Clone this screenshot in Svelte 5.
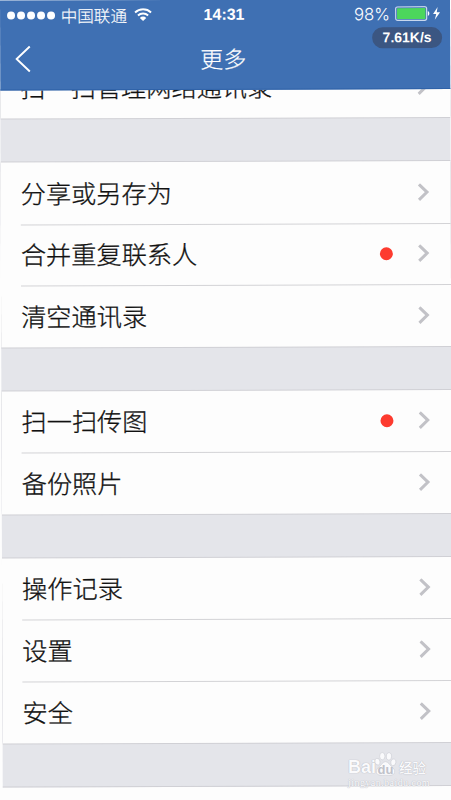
<script lang="ts">
  type Item = { label: string; dot?: boolean };

  const groups: Item[][] = [
    [{ label: '扫一扫管理网络通讯录' }],
    [{ label: '分享或另存为' }, { label: '合并重复联系人', dot: true }, { label: '清空通讯录' }],
    [{ label: '扫一扫传图', dot: true }, { label: '备份照片' }],
    [{ label: '操作记录' }, { label: '设置' }, { label: '安全' }],
  ];
</script>

<div class="viewport">
  <div class="screen">
    <header>
      <div class="status">
        <div class="carrier">
          <span class="signal">
            {#each Array(5) as _}
              <i></i>
            {/each}
          </span>
          <span class="name">中国联通</span>
          <svg class="wifi" width="18" height="13" viewBox="0 0 18 13">
            <path d="M1 4.4a11.6 11.6 0 0 1 16 0M3.9 7.4a7.4 7.4 0 0 1 10.2 0" fill="none" stroke="#fff" stroke-width="1.9" />
            <path d="M9 13 5.8 9.8a4.6 4.6 0 0 1 6.4 0z" fill="#fff" />
          </svg>
        </div>
        <span class="time">14:31</span>
        <div class="power">
          <span class="percent">98%</span>
          <svg width="46" height="15" viewBox="0 0 46 15">
            <rect x=".6" y=".6" width="31" height="13.6" rx="2" fill="none" stroke="#c9d8ee" stroke-width="1.2" />
            <rect x="2" y="2" width="28.4" height="10.8" rx=".6" fill="#4cd65c" />
            <path d="M32.8 5c2 .8 2 4 0 4.8z" fill="#fff" />
            <path d="M42.6 1 38 8h3.2l-1.5 5.6L45 6.100h-3.300z" fill="#fff" />
          </svg>
        </div>
      </div>
      <nav>
        <svg class="back" width="16" height="27" viewBox="0 0 16 27">
          <path d="M14.6 1 1.4 13.5 14.6 26" fill="none" stroke="#fff" stroke-width="1.9" />
        </svg>
        <h1>更多</h1>
      </nav>
      <span class="speed">7.61K/s</span>
    </header>

    <main>
      {#each groups as group}
        <ul>
          {#each group as item}
            <li>
              <span class="label">{item.label}</span>
              {#if item.dot}
                <i class="dot"></i>
              {/if}
              <svg class="chevron" width="12" height="18" viewBox="0 0 12 18">
                <path d="M1.3 1.3 9.3 9l-8 7.7" fill="none" stroke="#c2c2c7" stroke-width="3" />
              </svg>
            </li>
          {/each}
        </ul>
      {/each}
    </main>
  </div>

  <div class="watermark">
    <div class="brand">
      <span class="bai">Bai</span>
      <span class="paw">
        <svg width="23" height="26" viewBox="0 0 25 27">
          <g fill="#fafafc" stroke="#cdced5" stroke-width=".7">
            <ellipse cx="3.8" cy="11" rx="2.8" ry="3.7" transform="rotate(-15 3.8 11)" />
            <ellipse cx="9" cy="5" rx="2.9" ry="4" />
            <ellipse cx="16.2" cy="5.2" rx="2.9" ry="4" transform="rotate(8 16.2 5.2)" />
            <ellipse cx="21" cy="11.6" rx="2.8" ry="3.8" transform="rotate(12 21 11.6)" />
            <path d="M12.5 11c-3 0-4.2 3.2-6.3 5C3.7 18 2 19.8 2.6 22.6c.9 3.8 5.4 3.3 9.9 3.1 4.5.2 9 .7 9.9-3.1.6-2.8-1.3-4.6-3.6-6.6-2.1-1.8-3.3-5-6.3-5z" />
          </g>
        </svg>
        <b>du</b>
      </span>
      <span class="cn">经验</span>
    </div>
    <div class="site">jingyan.baidu.com</div>
  </div>
</div>

<style>
  :global(body) {
    background: #fdfdfd;
  }
  .viewport {
    position: relative;
    width: 451px;
    height: 800px;
    overflow: hidden;
    background: #fdfdfd;
    font-family: 'Noto Sans CJK SC', 'Liberation Sans', sans-serif;
  }
  /* the whole phone screen sits very slightly tilted */
  .screen {
    width: 450px;
    height: 800px;
    transform: translateY(0.6px) rotate(-0.2deg);
    transform-origin: 0 0;
  }
  header {
    position: relative;
    z-index: 1;
    height: 90px;
    box-sizing: border-box;
    background: #3f70b3;
    border-bottom: 1px solid #2f62a8;
    color: #fff;
  }
  .status {
    display: grid;
    grid-template-columns: 1fr auto 1fr;
    align-items: center;
    height: 29px;
    padding: 0 9px 0 7px;
  }
  .carrier,
  .power,
  .signal {
    display: flex;
    align-items: center;
  }
  .signal {
    gap: 1.9px;
  }
  .signal i {
    width: 8px;
    height: 8px;
    border-radius: 50%;
    background: #fff;
  }
  .name {
    margin-left: 6px;
    font-size: 16.6px;
    font-weight: 300;
    line-height: 20px;
    -webkit-text-stroke: 0.15px #fff;
  }
  .wifi {
    margin-left: 7px;
  }
  .time {
    font-family: 'Liberation Sans', sans-serif;
    font-size: 16px;
    font-weight: bold;
  }
  .power {
    justify-content: flex-end;
    gap: 5px;
  }
  .percent {
    font-family: Inter, 'Liberation Sans', sans-serif;
    font-size: 16.8px;
    font-weight: 300;
  }
  nav {
    display: flex;
    align-items: center;
    height: 59px;
    padding: 0 15px;
  }
  h1 {
    flex: 1;
    margin: -1px 20px 0 0;
    text-align: center;
    font-size: 23px;
    font-weight: 300;
    line-height: 25px;
    -webkit-text-stroke: 0.2px #fff;
  }
  .speed {
    position: absolute;
    top: 28px;
    right: 8px;
    width: 70px;
    height: 21px;
    border-radius: 11px;
    background: #3b5682;
    font: bold 14px/21px 'Liberation Sans', sans-serif;
    text-align: center;
  }
  main {
    display: flow-root;
    overflow: hidden;
    background: #e4e5ea;
    border-bottom: 1px solid #d0d0d5;
  }
  ul {
    margin: 0 0 43.6px;
    padding: 0;
    list-style: none;
    background: #fdfdfd;
    box-shadow: 0 -1px 0 #d0d0d5, 0 1px 0 #d0d0d5;
  }
  /* list is scrolled a little under the title bar */
  ul:first-child {
    margin-top: -33.4px;
  }
  li {
    display: flex;
    align-items: center;
    height: 61.7px;
    padding: 0 21px 0 20px;
    background: linear-gradient(#d3d3d6, #d3d3d6) 20px 0 / 100% 1.3px no-repeat;
  }
  li:first-child {
    background: none;
  }
  .label {
    flex: 1;
    margin-top: -2px;
    font-size: 25.2px;
    font-weight: 300;
    line-height: 26px;
    color: #111;
    -webkit-text-stroke: 0.3px #111;
  }
  .dot {
    width: 13px;
    height: 13px;
    margin-right: 25px;
    border-radius: 50%;
    background: #fd3b2f;
  }
  .watermark {
    position: absolute;
    left: 348px;
    top: 750px;
    width: 84px;
    color: #fafafc;
    text-shadow: 0 0 1px #b4b5bd, 0 0 1px #c4c5cc;
  }
  .brand {
    display: flex;
    align-items: flex-end;
    height: 27px;
    font: bold 18px/20px 'Liberation Sans', sans-serif;
  }
  .bai {
    width: 26px;
  }
  .paw {
    position: relative;
    height: 26px;
  }
  .paw b {
    position: absolute;
    left: 0;
    right: 0;
    bottom: 0;
    font-size: 13px;
    line-height: 15px;
    text-align: center;
    color: #c0c2ca;
    text-shadow: none;
  }
  .cn {
    margin-left: 2px;
    font: 500 13.5px/20px 'Noto Sans CJK SC', sans-serif;
  }
  .site {
    font: 10px/11px 'Liberation Serif', serif;
    white-space: nowrap;
    letter-spacing: 0.45px;
  }
</style>
